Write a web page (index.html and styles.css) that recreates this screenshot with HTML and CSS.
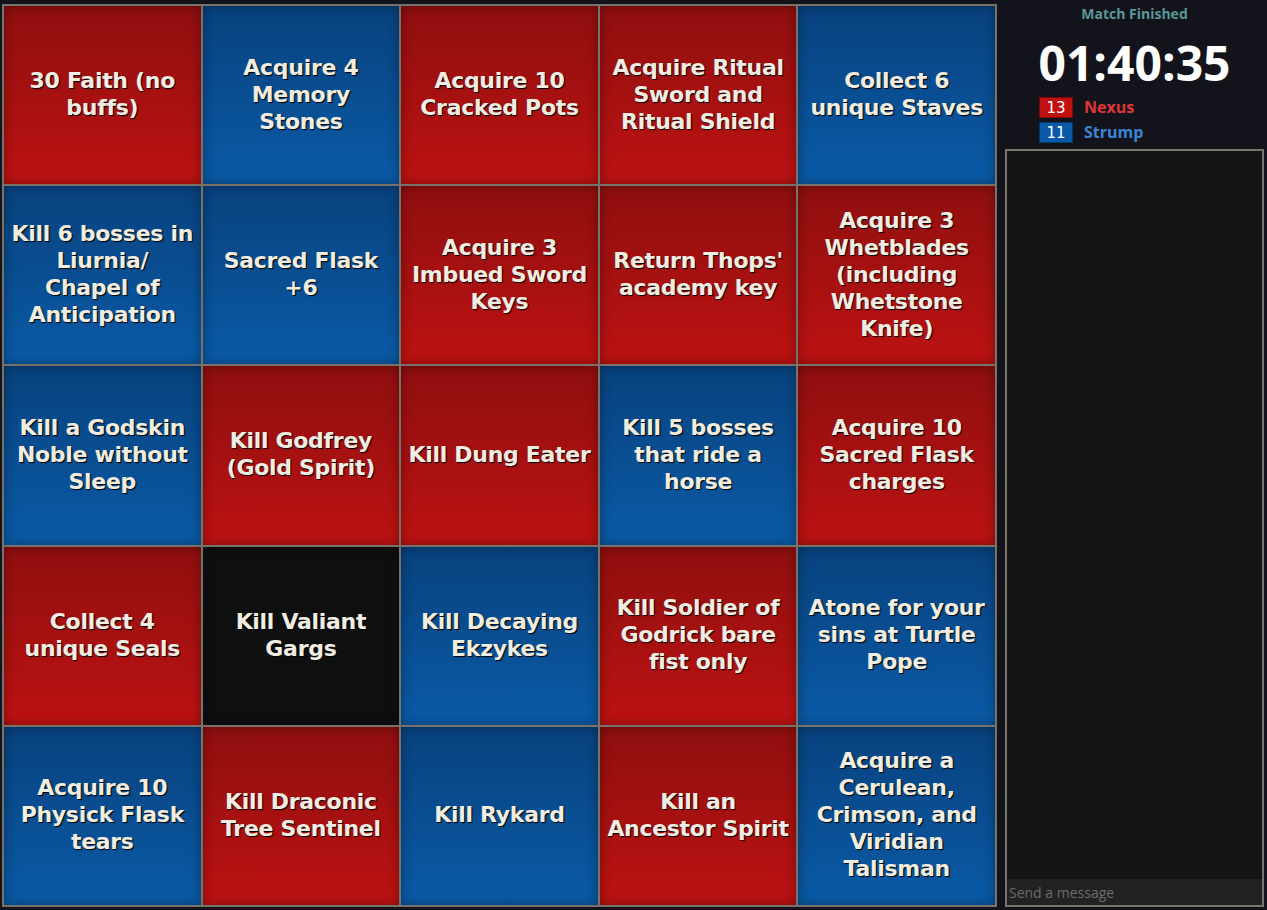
FILE: index.html
```html
<!DOCTYPE html>
<html>
<head>
<meta charset="utf-8">
<title>Bingo</title>
<link rel="stylesheet" href="styles.css">
</head>
<body>
<div class="page">
  <div class="board">
    <div class="cell red"><span>30 Faith (no buffs)</span></div>
    <div class="cell blue"><span>Acquire 4 Memory Stones</span></div>
    <div class="cell red"><span>Acquire 10 Cracked Pots</span></div>
    <div class="cell red"><span>Acquire Ritual Sword and Ritual Shield</span></div>
    <div class="cell blue"><span>Collect 6 unique Staves</span></div>

    <div class="cell blue"><span>Kill 6 bosses in Liurnia/<br>Chapel of Anticipation</span></div>
    <div class="cell blue"><span>Sacred Flask +6</span></div>
    <div class="cell red"><span>Acquire 3 Imbued Sword Keys</span></div>
    <div class="cell red"><span>Return Thops' academy key</span></div>
    <div class="cell red"><span>Acquire 3 Whetblades (including Whetstone Knife)</span></div>

    <div class="cell blue"><span>Kill a Godskin Noble without Sleep</span></div>
    <div class="cell red"><span>Kill Godfrey (Gold Spirit)</span></div>
    <div class="cell red"><span>Kill Dung Eater</span></div>
    <div class="cell blue"><span>Kill 5 bosses that ride a horse</span></div>
    <div class="cell red"><span>Acquire 10 Sacred Flask charges</span></div>

    <div class="cell red"><span>Collect 4 unique Seals</span></div>
    <div class="cell black"><span>Kill Valiant Gargs</span></div>
    <div class="cell blue"><span>Kill Decaying Ekzykes</span></div>
    <div class="cell red"><span>Kill Soldier of Godrick bare fist only</span></div>
    <div class="cell blue"><span>Atone for your sins at Turtle Pope</span></div>

    <div class="cell blue"><span>Acquire 10 Physick Flask tears</span></div>
    <div class="cell red"><span>Kill Draconic Tree Sentinel</span></div>
    <div class="cell blue"><span>Kill Rykard</span></div>
    <div class="cell red"><span>Kill an Ancestor Spirit</span></div>
    <div class="cell blue"><span>Acquire a Cerulean, Crimson, and Viridian Talisman</span></div>
  </div>

  <aside class="side">
    <div class="status">Match Finished</div>
    <div class="timer">01:40:35</div>
    <div class="scores">
      <div class="score">
        <span class="count count-red">13</span>
        <span class="name name-red">Nexus</span>
      </div>
      <div class="score">
        <span class="count count-blue">11</span>
        <span class="name name-blue">Strump</span>
      </div>
    </div>
    <div class="chat">
      <div class="messages"></div>
      <input class="chat-input" type="text" placeholder="Send a message">
    </div>
  </aside>
</div>
</body>
</html>
```

FILE: styles.css
```css
html, body {
  margin: 0;
  padding: 0;
  background: #13131c;
  height: 100%;
}

.page {
  display: flex;
  align-items: flex-start;
  padding: 4px 0 0 2px;
  gap: 8px;
}

.board {
  width: 995px;
  height: 903px;
  box-sizing: border-box;
  display: grid;
  grid-template-columns: repeat(5, 1fr);
  grid-template-rows: repeat(5, 1fr);
  gap: 2px;
  padding: 2px;
  background: #77726a;
}

.cell {
  display: flex;
  align-items: center;
  justify-content: center;
  text-align: center;
  padding: 0 6.5px 2px;
  font-family: "DejaVu Sans", sans-serif;
  font-weight: bold;
  font-size: 22px;
  letter-spacing: -0.3px;
  line-height: 27px;
  color: #f1ede2;
  text-shadow: 1px 1px 1px #000;
  box-shadow: inset 0 0 12px rgba(0, 0, 0, 0.35);
}

.red {
  background: linear-gradient(#8f0f0f, #bd1212);
}

.blue {
  background: linear-gradient(#08427e, #0a5aa6);
}

.black {
  background: #0e1010;
}

.side {
  width: 259px;
  height: 903px;
  display: flex;
  flex-direction: column;
  align-items: center;
}

.status {
  font-family: "Open Sans", sans-serif;
  font-weight: bold;
  font-size: 14px;
  color: #5a9898;
  line-height: 20px;
}

.timer {
  font-family: "Open Sans", sans-serif;
  font-weight: bold;
  font-size: 48px;
  line-height: 60px;
  color: #ffffff;
  margin-top: 9px;
}

.scores {
  align-self: flex-start;
  margin-left: 34px;
  display: flex;
  flex-direction: column;
  gap: 4px;
  margin-top: 4px;
}

.score {
  display: flex;
  align-items: center;
  gap: 11px;
  height: 21px;
}

.count {
  width: 34px;
  height: 21px;
  box-sizing: border-box;
  display: flex;
  align-items: center;
  justify-content: center;
  font-family: "DejaVu Sans", sans-serif;
  font-size: 15px;
  color: #fff;
}

.count-red {
  background: #c01010;
  border: 1px solid #7a0a0a;
}

.count-blue {
  background: #0a5aa8;
  border: 1px solid #06386a;
}

.name {
  font-family: "Open Sans", sans-serif;
  font-weight: bold;
  font-size: 16px;
  line-height: 21px;
}

.name-red {
  color: #e03636;
}

.name-blue {
  color: #3a86d4;
}

.chat {
  align-self: stretch;
  flex: 1;
  margin-top: 6px;
  border: 2px solid #7a756a;
  background: #141414;
  display: flex;
  flex-direction: column;
}

.messages {
  flex: 1;
}

.chat-input {
  height: 26px;
  box-sizing: border-box;
  border: none;
  outline: none;
  background: #222222;
  color: #ddd;
  font-family: "Open Sans", sans-serif;
  font-size: 14px;
  padding: 0 2px;
}

.chat-input::placeholder {
  color: #6c6c6c;
}
```
